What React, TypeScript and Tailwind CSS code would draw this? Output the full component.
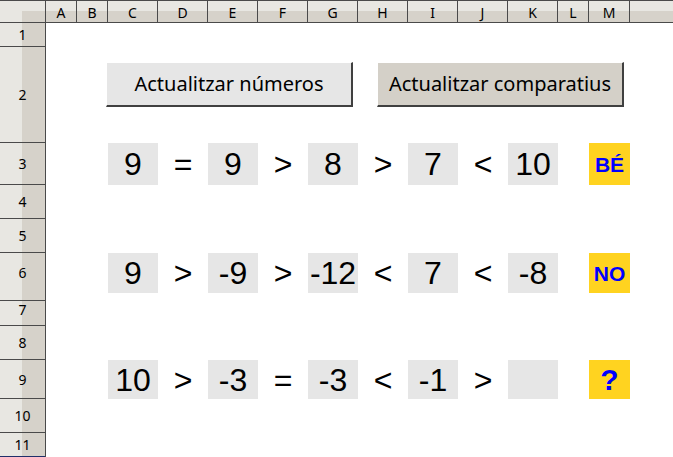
import React from 'react'

const COLS = [
  { name: 'A', w: 'w-[31px]' },
  { name: 'B', w: 'w-[31px]' },
  { name: 'C', w: 'w-[50px]' },
  { name: 'D', w: 'w-[50px]' },
  { name: 'E', w: 'w-[50px]' },
  { name: 'F', w: 'w-[50px]' },
  { name: 'G', w: 'w-[50px]' },
  { name: 'H', w: 'w-[50px]' },
  { name: 'I', w: 'w-[50px]' },
  { name: 'J', w: 'w-[50px]' },
  { name: 'K', w: 'w-[50px]' },
  { name: 'L', w: 'w-[31px]' },
  { name: 'M', w: 'w-[41px]' },
]

// row heights include the 1px bottom line of the row header
const ROWS = [
  { n: '1', h: 'h-[24px]' },
  { n: '2', h: 'h-[96px]' },
  { n: '3', h: 'h-[42px]' },
  { n: '4', h: 'h-[34px]' },
  { n: '5', h: 'h-[34px]' },
  { n: '6', h: 'h-[48px]' },
  { n: '7', h: 'h-[25px]' },
  { n: '8', h: 'h-[34px]' },
  { n: '9', h: 'h-[39px]' },
  { n: '10', h: 'h-[34px]' },
  { n: '11', h: 'h-[24px]' },
]

const headerBg = 'bg-[linear-gradient(to_bottom,#e8e7e2_50%,#d6d2ca_50%)]'
const rowHeaderBg = 'bg-[linear-gradient(to_right,#e8e7e2_50%,#d6d2ca_50%)]'

function CompareRow({ items, tag, boxH, tagSize }: { items: string[]; tag: string; boxH: string; tagSize: string }) {
  return (
    <div className="flex items-start h-full">
      <div className="w-[62px] shrink-0" />
      {items.map((v, i) =>
        i % 2 === 0 ? (
          <div
            key={i}
            className={`w-[50px] ${boxH} shrink-0 bg-[#e6e6e6] flex items-center justify-center text-[32px] text-black leading-none`}
          >
            {v}
          </div>
        ) : (
          <div
            key={i}
            className={`w-[50px] ${boxH} shrink-0 flex items-center justify-center text-[32px] text-black leading-none`}
          >
            {v}
          </div>
        )
      )}
      <div className="w-[31px] shrink-0" />
      <div
        className={`w-[41px] ${boxH} shrink-0 bg-[#ffd320] flex items-center justify-center ${tagSize} font-bold text-[#0000ff] leading-none`}
      >
        {tag}
      </div>
    </div>
  )
}

export default function App() {
  return (
    <div className="w-[673px] h-[457px] overflow-hidden bg-white font-['Liberation_Sans',Arial,sans-serif]">
      {/* Column headers */}
      <div className={`flex h-[23px] border-t border-b border-[#4a4a4a] ${headerBg} font-['Noto_Sans',sans-serif] text-[14px] text-black`}>
        <div className="w-[46px] shrink-0 border-r border-[#4a4a4a] bg-[linear-gradient(to_bottom,#e8e7e2_50%,transparent_50%),linear-gradient(to_right,#e8e7e2_50%,#d6d2ca_50%)]" />
        {COLS.map((c) => (
          <div key={c.name} className={`${c.w} shrink-0 border-r border-[#4a4a4a] flex items-center justify-center pt-[1px]`}>
            {c.name}
          </div>
        ))}
        <div className="flex-1" />
      </div>

      <div className="flex">
        {/* Row headers */}
        <div className={`w-[46px] shrink-0 border-r border-[#4a4a4a] ${rowHeaderBg} font-['Noto_Sans',sans-serif] text-[14px] text-black`}>
          {ROWS.map((r) => (
            <div
              key={r.n}
              className={`${r.h} flex items-center justify-center border-b ${r.n === '11' ? 'border-[#1f2f6a]' : 'border-[#4a4a4a]'} ${r.n === '6' || r.n === '7' ? 'pb-[8px]' : ''}`}
            >
              {r.n}
            </div>
          ))}
        </div>

        {/* Sheet */}
        <div className="flex-1 flex flex-col">
          <div className="h-[24px]" />
          <div className="h-[96px] flex items-start pt-[15px] pl-[60px] gap-[24px] font-['Noto_Sans',sans-serif] text-[20px] text-black">
            <div className="w-[247px] h-[45px] flex items-center justify-center bg-[#e6e6e6] border-t border-l border-white border-r-2 border-b-2 border-r-[#404040] border-b-[#404040]">
              Actualitzar números
            </div>
            <div className="w-[247px] h-[45px] flex items-center justify-center bg-[#d4d0c8] border-t border-l border-white border-r-2 border-b-2 border-r-[#404040] border-b-[#404040]">
              Actualitzar comparatius
            </div>
          </div>
          <div className="h-[42px]">
            <CompareRow items={['9', '=', '9', '>', '8', '>', '7', '<', '10']} tag="BÉ" boxH="h-[42px]" tagSize="text-[21px]" />
          </div>
          <div className="h-[34px]" />
          <div className="h-[34px]" />
          <div className="h-[48px]">
            <CompareRow items={['9', '>', '-9', '>', '-12', '<', '7', '<', '-8']} tag="NO" boxH="h-[40px]" tagSize="text-[21px]" />
          </div>
          <div className="h-[25px]" />
          <div className="h-[34px]" />
          <div className="h-[39px]">
            <CompareRow items={['10', '>', '-3', '=', '-3', '<', '-1', '>', '']} tag="?" boxH="h-[39px]" tagSize="text-[30px]" />
          </div>
          <div className="h-[34px]" />
          <div className="h-[24px]" />
        </div>
      </div>
    </div>
  )
}
